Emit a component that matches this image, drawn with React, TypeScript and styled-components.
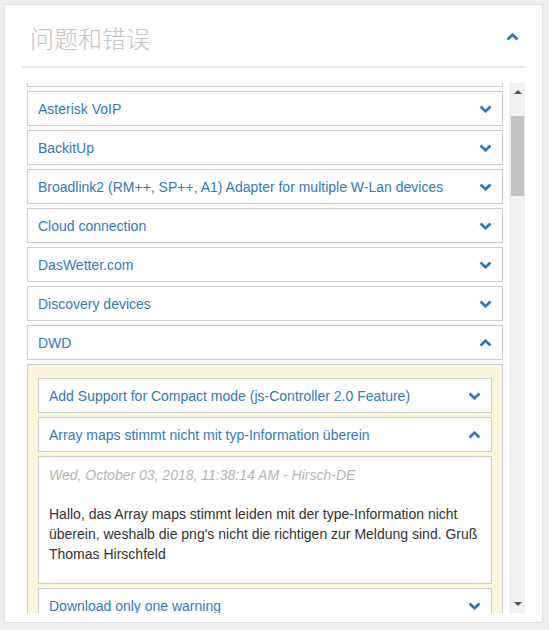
import React, { useLayoutEffect, useRef } from "react";
import styled, { createGlobalStyle } from "styled-components";

const GlobalStyle = createGlobalStyle`
  html, body {
    margin: 0;
    padding: 0;
    background: #eeeeee;
    font-family: "Liberation Sans", Arial, sans-serif;
  }
`;

const Panel = styled.div`
  box-sizing: border-box;
  margin: 4px;
  width: 539px;
  height: 619px;
  background: #ffffff;
  border: 1px solid #e2e2e2;
  padding: 0 17px 9px;
  display: flex;
  flex-direction: column;
`;

const Header = styled.div`
  box-sizing: border-box;
  height: 61px;
  padding: 8px 6px 0 8px;
  display: flex;
  align-items: center;
  justify-content: space-between;
`;

const Title = styled.h2`
  margin: 0 0 4px;
  font-family: "Noto Sans CJK SC", "Liberation Sans", sans-serif;
  font-weight: 300;
  font-size: 24px;
  line-height: 32px;
  color: #c4c4c4;
`;

const HeaderIcon = styled.span`
  display: flex;
  margin-bottom: 5px;
`;

const Divider = styled.div`
  height: 2px;
  background: #e4e9ee;
  margin-bottom: 15px;
  flex: none;
`;

const ScrollArea = styled.div`
  flex: 1;
  min-height: 0;
  display: flex;
`;

const Viewport = styled.div`
  flex: 1;
  min-width: 0;
  overflow: hidden;
  padding: 5px 6px 5px 5px;
`;

const ScrollBar = styled.div`
  width: 16px;
  flex: none;
  background: #f1f1f1;
  display: flex;
  flex-direction: column;
`;

const ArrowButton = styled.div<{ $down?: boolean }>`
  height: 17px;
  display: flex;
  align-items: center;
  justify-content: center;
  padding-left: 1px;

  &::before {
    content: "";
    width: 0;
    height: 0;
    border-left: 4px solid transparent;
    border-right: 4px solid transparent;
    ${(p) =>
      p.$down
        ? "border-top: 4px solid #505050; margin-top: -1px;"
        : "border-bottom: 4px solid #505050; margin-top: 1px;"}
  }
`;

const Track = styled.div`
  flex: 1;
  padding: 16px 1px 0 2px;
`;

const Thumb = styled.div`
  height: 80px;
  background: #c1c1c1;
`;

const ItemHead = styled.div`
  box-sizing: border-box;
  height: 35px;
  margin-bottom: 4px;
  padding: 0 10px;
  border: 1px solid #cccccc;
  background: #ffffff;
  display: flex;
  align-items: center;
  justify-content: space-between;
  color: #337ab7;
  font-size: 14px;
  line-height: 20px;
  white-space: nowrap;
`;

const ItemBody = styled.div`
  border: 1px solid #cccccc;
  background: #fcf6dd;
  padding: 13px 10px 9px;
  margin-bottom: 4px;
`;

const IssueText = styled.div`
  border: 1px solid #cccccc;
  background: #ffffff;
  padding: 8px 10px 19px;
  margin-bottom: 4px;
  font-size: 14px;
  line-height: 20px;
`;

const Meta = styled.div`
  font-style: italic;
  color: #b5b5b5;
  margin-bottom: 19px;
`;

const Body = styled.div`
  color: #333333;
`;

const Chevron = ({ up }: { up?: boolean }) => (
  <svg width="13" height="8" viewBox="0 0 13 8" aria-hidden="true">
    <path
      d={up ? "M1.5 6.5 L6.5 1.8 L11.5 6.5" : "M1.5 1.5 L6.5 6.2 L11.5 1.5"}
      fill="none"
      stroke="#2f78b8"
      strokeWidth="2.8"
    />
  </svg>
);

const before = ["Alexa2", "Amazon Dash", "Artnet"];
const visible = [
  "Asterisk VoIP",
  "BackitUp",
  "Broadlink2 (RM++, SP++, A1) Adapter for multiple W-Lan devices",
  "Cloud connection",
  "DasWetter.com",
  "Discovery devices",
];
const after = [
  "ECharts", "Email", "Enigma2", "Epson Stylus", "FakeRoku", "Feiertage", "FHEM",
  "Flot", "FritzBox", "Fronius", "Fullcalendar", "Geofency", "Grünbeck", "Harmony",
  "History", "HomeMatic RPC", "Hue", "iCal", "InfluxDB", "JavaScript", "KM200",
];
const dwdIssues = [
  "Fehlende Übersetzung der Warnstufen",
  "Region kann nicht ausgewählt werden",
];

export default function App() {
  const ref = useRef<HTMLDivElement>(null);
  useLayoutEffect(() => {
    if (ref.current) ref.current.scrollTop = 114;
  }, []);

  return (
    <>
      <GlobalStyle />
      <Panel>
        <Header>
          <Title>问题和错误</Title>
          <HeaderIcon>
            <Chevron up />
          </HeaderIcon>
        </Header>
        <Divider />
        <ScrollArea>
          <Viewport ref={ref}>
            {[...before, ...visible].map((name) => (
              <ItemHead key={name}>
                {name}
                <Chevron />
              </ItemHead>
            ))}
            <ItemHead>
              DWD
              <Chevron up />
            </ItemHead>
            <ItemBody>
              <ItemHead>
                Add Support for Compact mode (js-Controller 2.0 Feature)
                <Chevron />
              </ItemHead>
              <ItemHead>
                Array maps stimmt nicht mit typ-Information überein
                <Chevron up />
              </ItemHead>
              <IssueText>
                <Meta>Wed, October 03, 2018, 11:38:14 AM - Hirsch-DE</Meta>
                <Body>
                  Hallo, das Array maps stimmt leiden mit der type-Information nicht
                  überein, weshalb die png's nicht die richtigen zur Meldung sind. Gruß
                  Thomas Hirschfeld
                </Body>
              </IssueText>
              <ItemHead>
                Download only one warning
                <Chevron />
              </ItemHead>
              {dwdIssues.map((name) => (
                <ItemHead key={name}>
                  {name}
                  <Chevron />
                </ItemHead>
              ))}
            </ItemBody>
            {after.map((name) => (
              <ItemHead key={name}>
                {name}
                <Chevron />
              </ItemHead>
            ))}
          </Viewport>
          <ScrollBar>
            <ArrowButton />
            <Track>
              <Thumb />
            </Track>
            <ArrowButton $down />
          </ScrollBar>
        </ScrollArea>
      </Panel>
    </>
  );
}
